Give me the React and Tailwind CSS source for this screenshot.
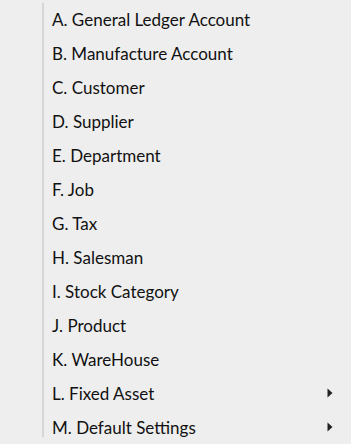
const items = [
  { label: "A. General Ledger Account" },
  { label: "B. Manufacture Account" },
  { label: "C. Customer" },
  { label: "D. Supplier" },
  { label: "E. Department" },
  { label: "F. Job" },
  { label: "G. Tax" },
  { label: "H. Salesman" },
  { label: "I. Stock Category" },
  { label: "J. Product" },
  { label: "K. WareHouse" },
  { label: "L. Fixed Asset", sub: true },
  { label: "M. Default Settings", sub: true },
];

export default function App() {
  return (
    <div
      className="w-[351px] h-[444px] bg-[#eeeeee] overflow-hidden text-[#111111] flex"
      style={{ fontFamily: 'Lato, "Open Sans", sans-serif' }}
    >
      {/* gutter with separator */}
      <div className="w-[44px] pt-[3px] pb-[7px] flex justify-end">
        <div className="w-[2px] h-full bg-[#d6d6d6]" />
      </div>

      <ul className="flex-1 pt-[2px]">
        {items.map((item) => (
          <li key={item.label} className="h-[34px] flex items-center pl-[8px] pr-[18px]">
            <span className="flex-1 text-[17px] leading-none">{item.label}</span>
            {item.sub && (
              <svg width="6" height="10" viewBox="0 0 6 10" className="text-[#222222]">
                <path d="M0.5 0.5 L5.5 5 L0.5 9.5 Z" fill="currentColor" />
              </svg>
            )}
          </li>
        ))}
      </ul>
    </div>
  );
}
